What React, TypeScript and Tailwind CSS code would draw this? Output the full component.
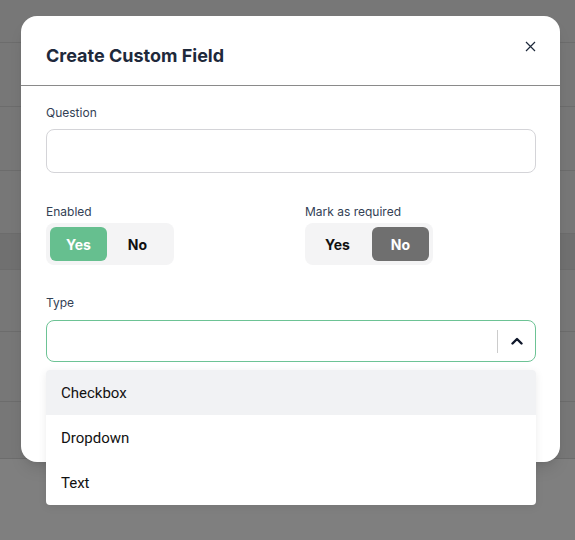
import React from "react";

const rows = [
  "h-[43px]",
  "h-[64px]",
  "h-[64px]",
  "h-[63px]",
  "h-[36px] bg-[#707070]",
  "h-[62px]",
  "h-[70px]",
  "h-[57px]",
];

function Toggle({ value, activeClass, gap }: { value: "yes" | "no"; activeClass: string; gap: string }) {
  return (
    <div className={"flex w-[128px] h-[42px] p-1 rounded-lg bg-[#f4f4f5] " + gap}>
      <div
        className={
          "w-[57px] h-[34px] rounded-md flex items-center justify-center text-[14px] font-bold " +
          (value === "yes" ? activeClass + " text-white" : "text-[#111111]")
        }
      >
        Yes
      </div>
      <div
        className={
          "w-[57px] h-[34px] rounded-md flex items-center justify-center text-[14px] font-bold " +
          (value === "no" ? activeClass + " text-white" : "text-[#111111]")
        }
      >
        No
      </div>
    </div>
  );
}

export default function App() {
  return (
    <div
      className="relative w-[575px] h-[540px] overflow-hidden bg-[#7f7f7f]"
      style={{ fontFamily: "Inter, 'Noto Sans', sans-serif" }}
    >
      <div className="flex flex-col bg-[#777777]">
        {rows.map((r, i) => (
          <div key={i} className={"border-b border-[#6c6c6c] " + r} />
        ))}
      </div>

      <div className="absolute left-[21px] top-[16px] w-[539px] h-[446px] rounded-2xl bg-white shadow-lg">
        <div className="relative h-[70px] pt-[26px] px-[25px] border-b border-[#8a8a8a]">
          <h2 className="text-[18px] leading-[28px] font-bold text-[#1e293b]">Create Custom Field</h2>
          <svg
            className="absolute right-[24px] top-[25px]"
            width="11"
            height="11"
            viewBox="0 0 11 11"
            fill="none"
            stroke="#1e293b"
            strokeWidth="1.2"
          >
            <path d="M1 1L10 10M10 1L1 10" />
          </svg>
        </div>

        <div className="pl-[25px] pr-[24px] pt-[18px]">
          <div className="text-[12px] leading-[18px] text-[#334155] mb-[7px]">Question</div>
          <div className="h-[44px] rounded-lg border border-[#d4d4d8]" />

          <div className="grid grid-cols-2 gap-[28px] mt-[30px]">
            <div>
              <div className="text-[12px] leading-[18px] text-[#334155] mb-[2px]">Enabled</div>
              <Toggle value="yes" activeClass="bg-[#66bf8f]" gap="gap-[2px]" />
            </div>
            <div>
              <div className="text-[12px] leading-[18px] text-[#334155] mb-[2px]">Mark as required</div>
              <Toggle value="no" activeClass="bg-[#6f6f6f]" gap="gap-[6px]" />
            </div>
          </div>

          <div className="text-[12px] leading-[18px] text-[#334155] mt-[29px] mb-[8px]">Type</div>
          <div className="relative">
            <div className="h-[42px] rounded-lg border border-[#6dc395] flex items-center justify-end">
              <div className="w-px h-[23px] bg-[#cccccc]" />
              <div className="w-[37px] flex items-center justify-center">
                <svg width="12" height="8" viewBox="0 0 12 8" fill="none" stroke="#0f172a" strokeWidth="2.4" strokeLinecap="round" strokeLinejoin="round">
                  <path d="M1.5 6.5L6 2L10.5 6.5" />
                </svg>
              </div>
            </div>

            <div
              className="absolute left-0 right-0 top-[50px] rounded-[4px] bg-white shadow-[0_2px_8px_rgba(0,0,0,0.08)] overflow-hidden"
              style={{ fontFamily: "Roboto, 'Liberation Sans', sans-serif" }}
            >
              <div className="h-[45px] px-[15px] pt-[2px] flex items-center bg-[#f1f2f4] text-[15px] text-[#111111]">Checkbox</div>
              <div className="h-[45px] px-[15px] pt-[2px] flex items-center text-[15px] text-[#111111]">Dropdown</div>
              <div className="h-[45px] px-[15px] pt-[2px] flex items-center text-[15px] text-[#111111]">Text</div>
            </div>
          </div>
        </div>
      </div>
    </div>
  );
}
